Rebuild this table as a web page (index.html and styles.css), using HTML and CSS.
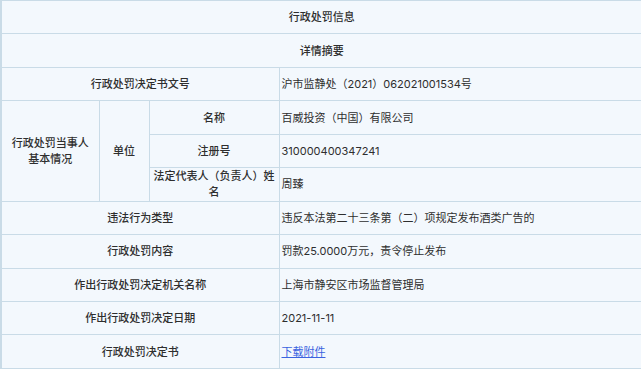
FILE: index.html
```html
<!DOCTYPE html>
<html lang="zh-CN">
<head>
<meta charset="utf-8">
<title>行政处罚信息</title>
<link rel="stylesheet" href="styles.css">
</head>
<body>
<table class="info">
  <colgroup>
    <col class="col1">
    <col class="col2">
    <col class="col3">
    <col class="col4">
  </colgroup>
  <tr><td class="head" colspan="4">行政处罚信息</td></tr>
  <tr><td class="head" colspan="4">详情摘要</td></tr>
  <tr><td class="label" colspan="3">行政处罚决定书文号</td><td class="value">沪市监静处（2021）062021001534号</td></tr>
  <tr>
    <td class="label" rowspan="3">行政处罚当事人<br>基本情况</td>
    <td class="label" rowspan="3">单位</td>
    <td class="label">名称</td>
    <td class="value">百威投资（中国）有限公司</td>
  </tr>
  <tr><td class="label">注册号</td><td class="value">310000400347241</td></tr>
  <tr><td class="label">法定代表人（负责人）姓<br>名</td><td class="value">周臻</td></tr>
  <tr><td class="label" colspan="3">违法行为类型</td><td class="value">违反本法第二十三条第（二）项规定发布酒类广告的</td></tr>
  <tr><td class="label" colspan="3">行政处罚内容</td><td class="value">罚款25.0000万元，责令停止发布</td></tr>
  <tr><td class="label" colspan="3">作出行政处罚决定机关名称</td><td class="value">上海市静安区市场监督管理局</td></tr>
  <tr><td class="label" colspan="3">作出行政处罚决定日期</td><td class="value">2021-11-11</td></tr>
  <tr><td class="label" colspan="3">行政处罚决定书</td><td class="value"><a href="#" class="link">下载附件</a></td></tr>
</table>
</body>
</html>
```

FILE: styles.css
```css
html, body {
  margin: 0;
  padding: 0;
  background: #ffffff;
}
body {
  font-family: Inter, "Noto Sans CJK SC", sans-serif;
  font-size: 11px;
  color: #333333;
}
.info {
  width: 641px;
  border-collapse: collapse;
  table-layout: fixed;
  border-left: 2px solid #c9dbe7;
}
.col1 { width: 98px; }
.col2 { width: 50px; }
.col3 { width: 130px; }
.col4 { width: 363px; }
.info tr {
  height: 33.45px;
}
.info td {
  border: 1px solid #c9dbe7;
  background: #f3f8fd;
  padding: 0 2px;
  line-height: 16px;
  vertical-align: middle;
  white-space: nowrap;
}
.head,
.label {
  text-align: center;
  font-weight: 500;
  color: #2e2e2e;
}
.value {
  text-align: left;
  padding-left: 4px;
  font-weight: 400;
  color: #2e2e2e;
}
.link {
  color: #3a63e0;
  text-decoration: underline;
}
```
